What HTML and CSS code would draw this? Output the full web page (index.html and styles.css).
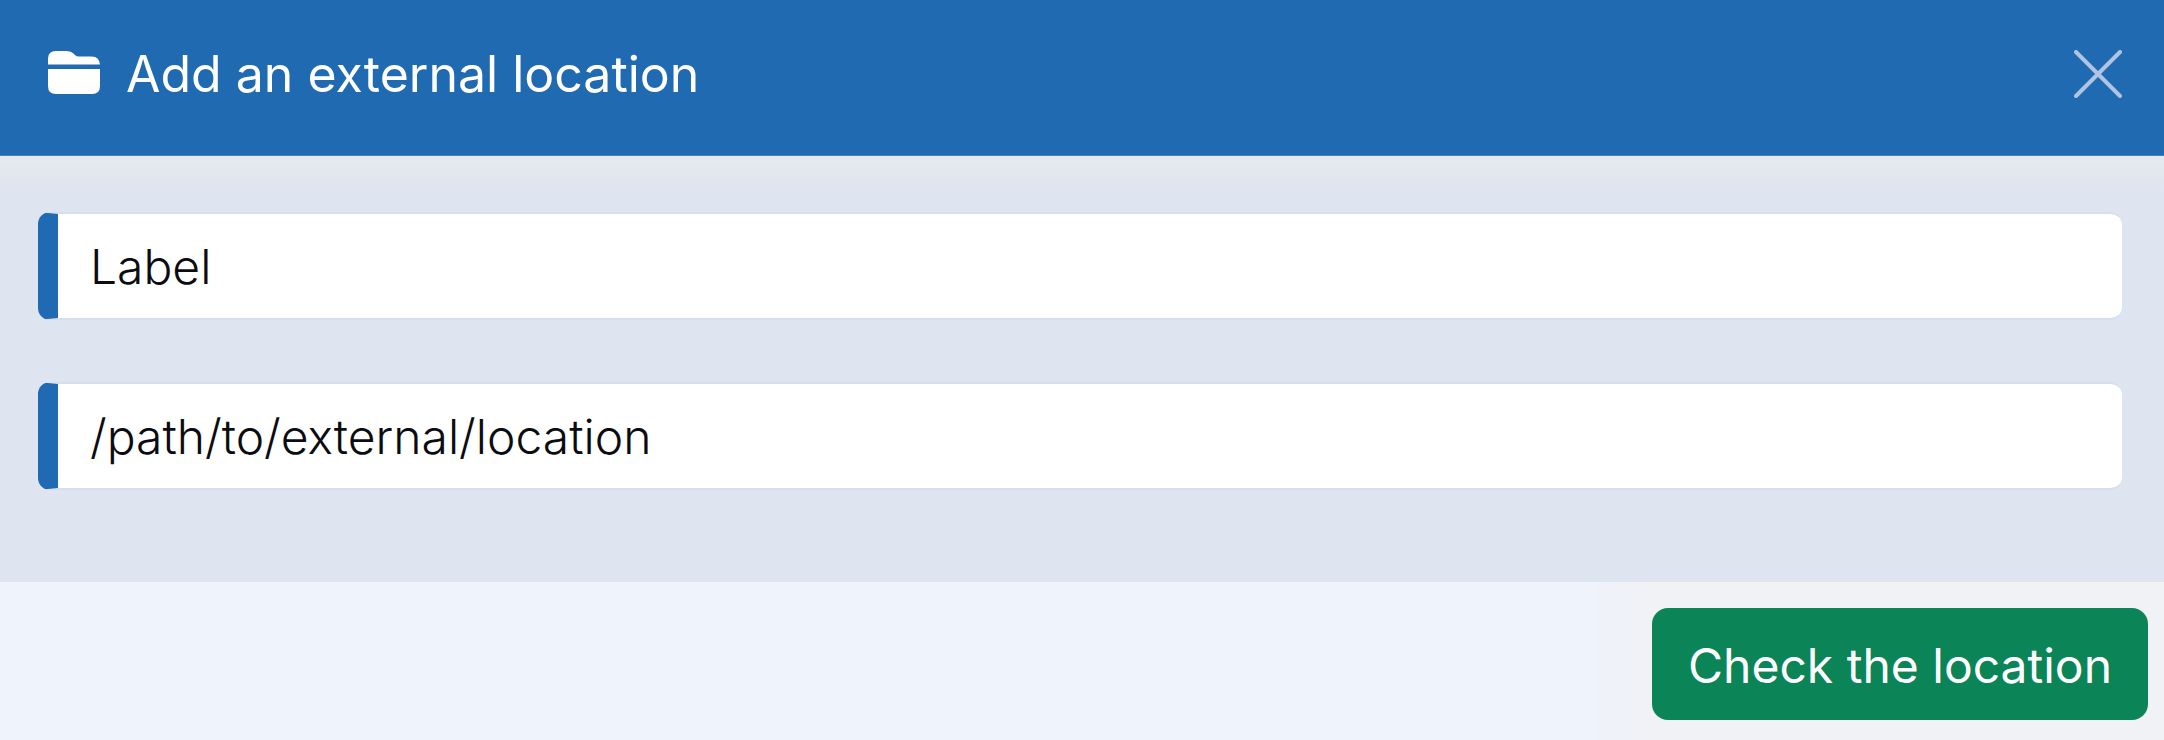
FILE: index.html
```html
<!DOCTYPE html>
<html lang="en">
  <head>
    <meta charset="utf-8" />
    <meta name="viewport" content="width=device-width, initial-scale=1" />
    <title>Add an external location</title>
    <link rel="stylesheet" href="styles.css">
  </head>
  <body>
    <form class="modal">
      <header class="modal-header">
        <svg class="folder-icon" viewBox="0 0 52 43" aria-hidden="true">
          <path d="M0 13.500V7.500Q0 0 8 0H19Q23 0 25.500 2.500L27 4Q28.500 5.500 31 5.500H44Q51 5.500 52 13.500Z"/>
          <path d="M0 18H52V35Q52 43 44 43H8Q0 43 0 35Z"/>
        </svg>
        <h1 class="modal-title">Add an external location</h1>
        <button type="button" class="close" aria-label="Close">
          <svg class="close-icon" viewBox="0 0 48 48" aria-hidden="true">
            <path d="M2 2L46 46M46 2L2 46"/>
          </svg>
        </button>
      </header>
      <div class="modal-body">
        <input class="field" type="text" name="label" placeholder="Label" aria-label="Label" />
        <input class="field" type="text" name="path" placeholder="/path/to/external/location" aria-label="External location path" />
      </div>
      <footer class="modal-footer">
        <div class="actions">
          <button type="submit" class="btn-check">Check the location</button>
        </div>
      </footer>
    </form>
  </body>
</html>
```
FILE: styles.css
```css
* {
  box-sizing: border-box;
}

body {
  margin: 0;
  font-family: Inter, "Liberation Sans", sans-serif;
  background: #eff3fc;
}

.modal {
  display: flex;
  flex-direction: column;
  min-height: 100vh;
}

.modal-header {
  display: flex;
  align-items: center;
  padding: 40px 42px 47px 48px;
  background: #1f6ab0;
  border-bottom: 1px solid #4a7dbd;
}

.folder-icon {
  width: 52px;
  height: 43px;
  margin-bottom: 4px;
  fill: #ffffff;
}

.modal-title {
  margin: 0 auto 0 26px;
  font-size: 50px;
  line-height: 68px;
  font-weight: 400;
  color: #ffffff;
}

.close {
  display: flex;
  padding: 0;
  border: none;
  background: none;
  cursor: pointer;
}

.close-icon {
  width: 48px;
  height: 48px;
  fill: none;
  stroke: #b1c3e2;
  stroke-width: 4;
  stroke-linecap: round;
}

.modal-body {
  display: flex;
  flex-direction: column;
  gap: 62px;
  padding: 56px 42px 92px 38px;
  background: linear-gradient(#e6e9ef, #dfe5f0 30px);
}

.field {
  width: 100%;
  height: 108px;
  padding: 0 32px;
  border: solid rgba(150, 175, 205, 0.1);
  border-width: 2px 0;
  border-left: 20px solid #1f6ab3;
  border-radius: 12px;
  background: #ffffff;
  background-clip: padding-box;
  font-family: inherit;
  font-size: 48px;
  font-weight: 300;
  color: #0b0c11;
}

.field::placeholder {
  color: #0b0c11;
  opacity: 1;
}

.modal-footer {
  display: flex;
  flex: 1;
  justify-content: flex-end;
}

.actions {
  padding: 26px 16px 20px 54px;
  background: linear-gradient(90deg, #eff2f9, #f0f2f6 54px);
}

.btn-check {
  height: 112px;
  padding: 2px 36px 0;
  border: none;
  border-radius: 16px;
  background: #0b8457;
  font-family: inherit;
  font-size: 48px;
  font-weight: 400;
  color: #ffffff;
  cursor: pointer;
}
```
